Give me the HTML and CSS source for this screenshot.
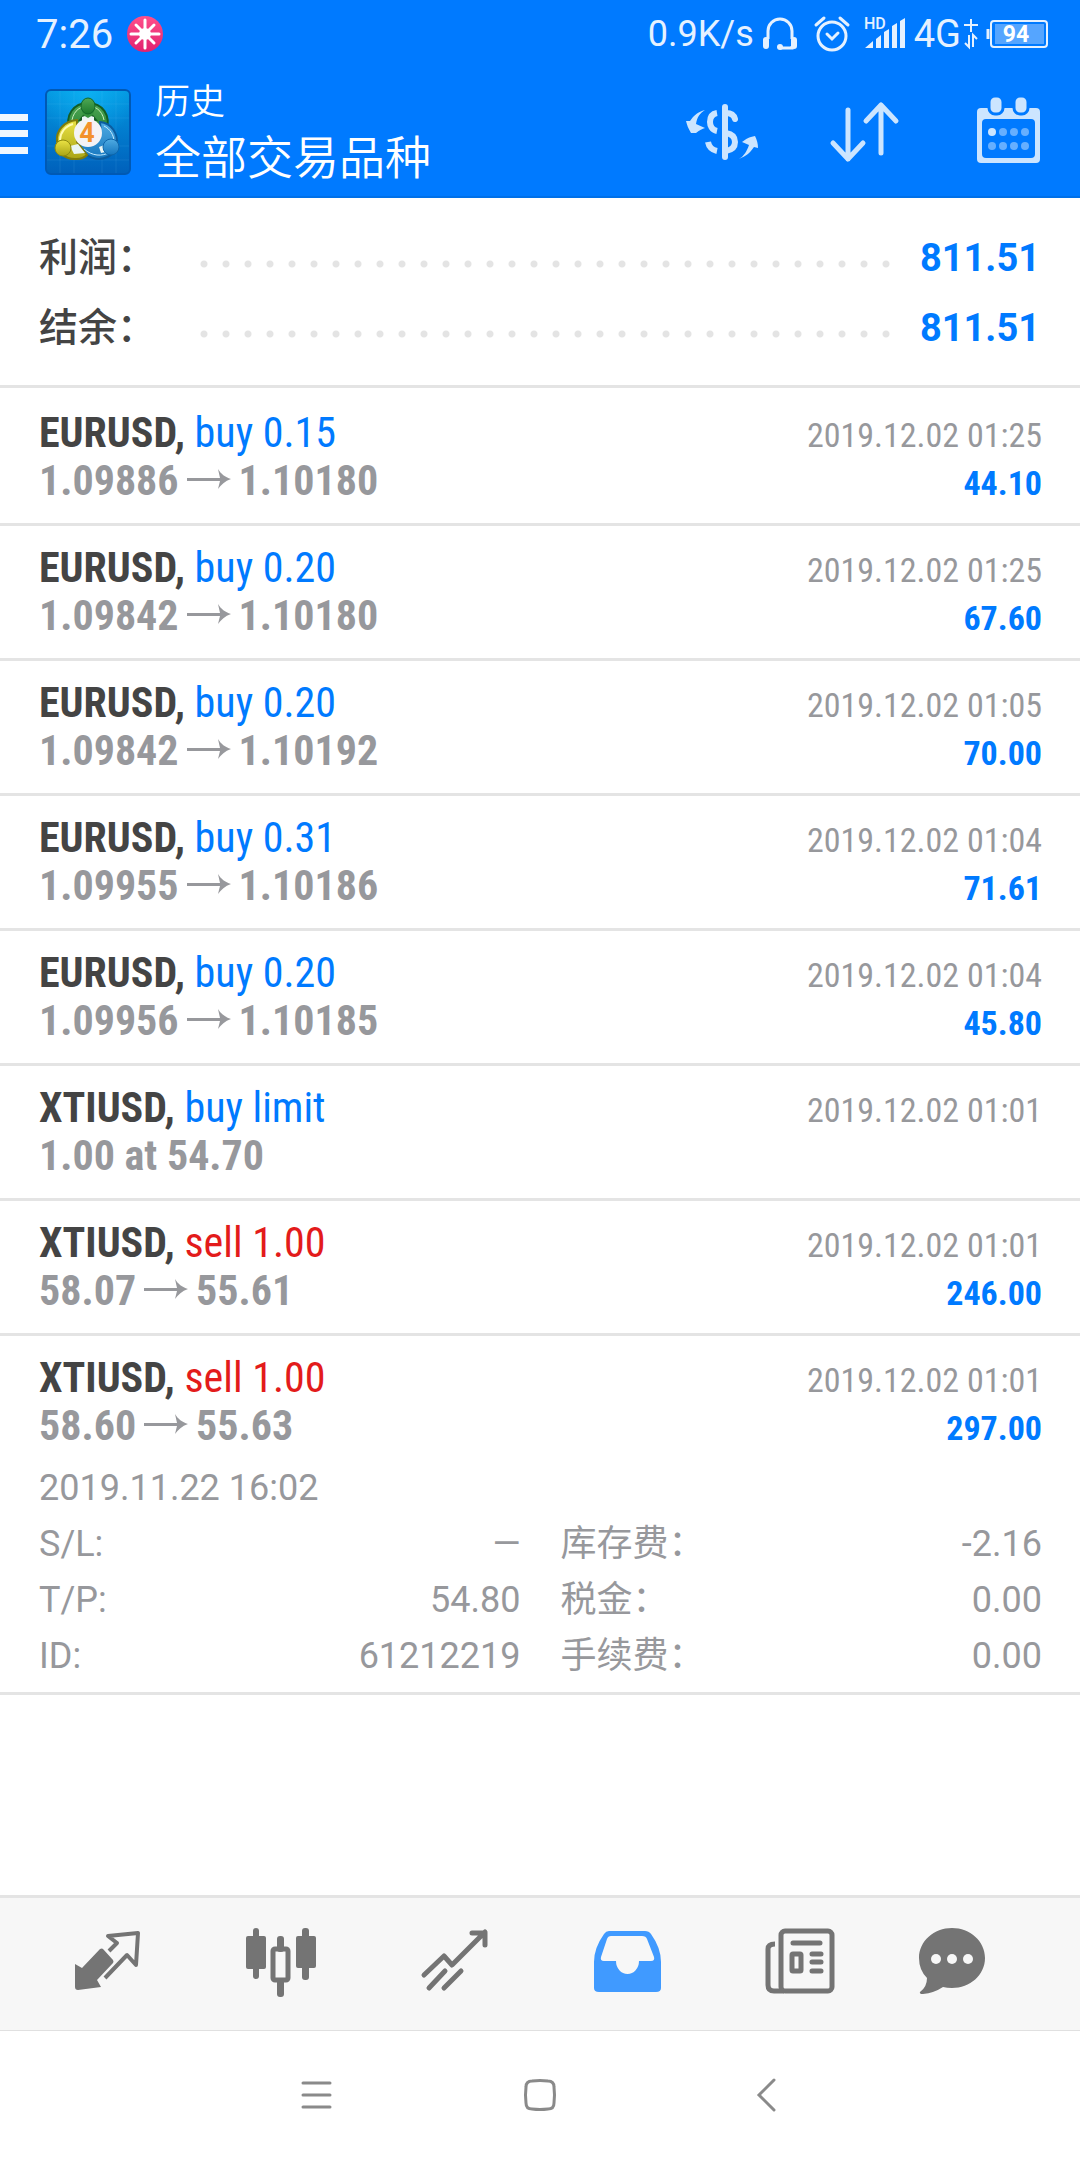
FILE: index.html
```html
<!DOCTYPE html>
<html lang="zh-CN">
<head>
<meta charset="utf-8">
<meta name="viewport" content="width=device-width, initial-scale=1">
<title>历史</title>
<link rel="stylesheet" href="styles.css">
</head>
<body>
<div class="top">
  <div class="status">
    <span class="status-time">7:26</span>
    <svg class="status-app" width="36" height="36" viewBox="0 0 36 36" aria-hidden="true">
      <defs><linearGradient id="pink" x1="0" y1="0" x2="0" y2="1"><stop offset="0" stop-color="#ff4f8b"/><stop offset="1" stop-color="#e0226f"/></linearGradient></defs>
      <circle cx="18" cy="18" r="18" fill="url(#pink)"/>
      <circle cx="18" cy="18" r="6" fill="#fff"/>
      <path d="M18 4v28M4 18h28M9 9l18 18M27 9L9 27" stroke="#fff" stroke-width="3" stroke-linecap="round"/>
    </svg>
    <span class="status-speed">0.9K/s</span>
    <svg class="status-phones" width="36" height="34" viewBox="0 0 36 34" fill="none" stroke="#e5f1ff" aria-hidden="true">
      <path d="M6 22V14a12 12 0 0 1 24 0v8" stroke-width="3"/>
      <path d="M4 23v6M32 23v6" stroke-width="6" stroke-linecap="round"/>
      <path d="M30 29v2H18" stroke-width="3"/><circle cx="18" cy="30" r="3" fill="#e5f1ff" stroke="none"/>
    </svg>
    <svg class="status-alarm" width="36" height="36" viewBox="0 0 36 36" fill="none" stroke="#e5f1ff" stroke-width="3" stroke-linecap="round" aria-hidden="true">
      <circle cx="18" cy="20" r="14"/><path d="M13 18l5 5 6-6M2 9l8-7M34 9l-8-7"/>
    </svg>
    <svg class="status-signal" width="44" height="34" viewBox="0 0 44 34" fill="#e5f1ff" aria-hidden="true">
      <text x="0" y="12" class="hd">HD</text>
      <path d="M1 31l8-7v7zM12 31V22l5-4v13zM20 31V15l5-3v19zM28 31V9l5-3v25zM36 31V4l5-3v30z"/>
    </svg>
    <span class="status-net">4G</span>
    <svg class="status-data" width="14" height="32" viewBox="0 0 14 32" fill="none" stroke="#e5f1ff" stroke-width="2" aria-hidden="true">
      <path d="M7 1v13M0 7h14M5 17v12l-4-4M9 29V17l4 4"/>
    </svg>
    <svg class="status-battery" width="62" height="28" viewBox="0 0 62 28" aria-hidden="true">
      <path d="M2 9v10" stroke="#e5f1ff" stroke-width="3"/>
      <rect x="5" y="1" width="56" height="26" rx="3" fill="none" stroke="#e5f1ff" stroke-width="2"/>
      <rect x="9" y="4" width="49" height="20" fill="#55a5ff"/>
      <text x="30" y="22" text-anchor="middle" class="charge">94</text>
    </svg>
  </div>

  <header class="appbar">
    <button class="menu" type="button" aria-label="菜单">
      <svg width="28" height="48" viewBox="0 0 28 48" fill="#f0f7ff"><path d="M0 6h28v7H0zM0 22h28v7H0zM0 39h28v7H0z"/></svg>
    </button>
    <svg class="logo" width="86" height="86" viewBox="0 0 86 86" aria-hidden="true">
      <defs>
        <linearGradient id="sky" x1="0" y1="0" x2="0" y2="1"><stop offset="0" stop-color="#0397e0"/><stop offset="1" stop-color="#0060bb"/></linearGradient>
        <radialGradient id="shine" cx=".5" cy="0" r=".6"><stop offset="0" stop-color="#12c2ff" stop-opacity=".6"/><stop offset="1" stop-color="#12c2ff" stop-opacity="0"/></radialGradient>
        <linearGradient id="green" x1="0" y1="0" x2="0" y2="1"><stop offset="0" stop-color="#4fa855"/><stop offset="1" stop-color="#1d7a2c"/></linearGradient>
        <linearGradient id="yellow" x1="0" y1="0" x2="0" y2="1"><stop offset="0" stop-color="#ebe345"/><stop offset="1" stop-color="#a9a414"/></linearGradient>
        <linearGradient id="blue" x1="0" y1="0" x2="0" y2="1"><stop offset="0" stop-color="#4fabe2"/><stop offset="1" stop-color="#1576bf"/></linearGradient>
      </defs>
      <rect x="1" y="1" width="84" height="84" rx="5" fill="url(#sky)" stroke="#0059b4" stroke-width="2"/>
      <rect x="2" y="2" width="82" height="82" rx="4" fill="url(#shine)"/>
      <path d="M15 2v82M29 2v82M57 2v82M71 2v82M2 15h82M2 29h82M2 57h82M2 71h82" stroke="#7fd0ff" stroke-opacity=".12"/>
      <path d="M25 42C19 26 29 14 43 14s24 12 18 29c-2 6-7 7-13 7z" fill="url(#green)" stroke="#135f24" stroke-width="2"/>
      <path d="M27 31C29 21 36 17 43 17s14 4 16 14" fill="none" stroke="#c8efc0" stroke-width="1"/>
      <path d="M33 32l5-6h10l5 6z" fill="#165f26"/>
      <path d="M55 33c12 1 18 12 17 23-2 11-14 16-24 13-7-2-12-8-14-14l14-4c6-4 9-9 7-18z" fill="url(#blue)" stroke="#0b5c9f" stroke-width="2"/>
      <path d="M59 37c6 3 10 9 10 16M39 60c8 7 18 8 26 3" fill="none" stroke="#c4ebff" stroke-width="1"/>
      <path d="M32 31c-14 1-21 12-20 21 0 12 9 19 20 18 5 0 8-2 10-4L32 53z" fill="url(#yellow)" stroke="#7f7c0c" stroke-width="2"/>
      <path d="M28 35c-8 2-13 9-13 16" fill="none" stroke="#fffbb0" stroke-width="2"/>
      <path d="M25 57l8-2 7 9-11 1zM54 58l8-3 3 7-9 2zM37 28l6-2 6 2v4H37z" fill="#e9f5f4"/>
      <path d="M37 22h12l-1 4-5 3-5-3z" fill="#35923f"/>
      <ellipse cx="43" cy="17" rx="7" ry="8" fill="url(#green)" stroke="#14682a"/>
      <circle cx="18" cy="59" r="8" fill="url(#yellow)" stroke="#8d8a10"/>
      <circle cx="66" cy="58" r="8" fill="url(#blue)" stroke="#0e66ab"/>
      <circle cx="43" cy="44" r="14" fill="#f4f3f5"/>
      <text x="42" y="53" text-anchor="middle" class="logo-digit">4</text>
    </svg>
    <div class="titles">
      <h1 class="title">历史</h1>
      <p class="subtitle">全部交易品种</p>
    </div>
    <div class="actions">
      <button type="button" aria-label="货币">
        <svg width="72" height="72" viewBox="0 0 72 72" fill="#cce5ff">
          <path d="M19 14C14 17 11 21 10 28l9 4c-3 1-5 2-9 5h-5C2 32 1 29 0 25h4C8 19 12 16 19 14zM53 63c5-3 8-8 10-14l-7-3c4-3 7-5 13-6 2 4 3 8 3 12l-4-1c-4 6-8 9-15 12z"/>
          <rect x="36" y="8" width="6" height="56" rx="3"/>
          <path d="M31 17c-6 1-7 5-7 9s2 8 7 9M31 55c-5-1-8-4-9-9" fill="none" stroke="#cce5ff" stroke-width="6"/>
          <path d="M40 17c5 0 8 2 9 6" fill="none" stroke="#cce5ff" stroke-width="6" stroke-linecap="round"/>
          <path d="M40 37c6 1 9 4 9 9s-3 8-9 9" fill="none" stroke="#cce5ff" stroke-width="6"/>
        </svg>
      </button>
      <button type="button" aria-label="排序">
        <svg width="72" height="72" viewBox="0 0 72 72" fill="none" stroke="#cce5ff" stroke-width="5" stroke-linecap="round" stroke-linejoin="round">
          <path d="M19 14v49M4 47l15 16 15-16M52 57V9M37 25L52 9l15 16"/>
        </svg>
      </button>
      <button type="button" aria-label="日历">
        <svg width="72" height="72" viewBox="0 0 72 72">
          <rect x="5" y="12" width="63" height="55" rx="4" fill="#cce5ff"/>
          <rect x="10" y="23" width="53" height="39" rx="4" fill="#007aff"/>
          <g fill="#cce5ff" stroke="#007aff" stroke-width="3"><rect x="17" y="0" width="14" height="18" rx="6"/><rect x="42" y="0" width="14" height="18" rx="6"/></g>
          <circle cx="20" cy="36" r="4" fill="#cce5ff"/>
          <g fill="#66afff"><circle cx="31" cy="36" r="4"/><circle cx="42" cy="36" r="4"/><circle cx="53" cy="36" r="4"/><circle cx="20" cy="50" r="4"/><circle cx="31" cy="50" r="4"/><circle cx="42" cy="50" r="4"/><circle cx="53" cy="50" r="4"/></g>
        </svg>
      </button>
    </div>
  </header>
</div>

<svg class="sprite" aria-hidden="true">
  <symbol id="arrow" viewBox="0 0 44 22"><path d="M0 10h33L31 1c3 5 7 8 13 10-6 2-10 6-13 10l2-8H0z" fill="#97989c"/></symbol>
</svg>

<main class="content">
  <dl class="summary">
    <div class="summary-row"><dt>利润：</dt><dd class="leader" aria-hidden="true"></dd><dd class="total">811.51</dd></div>
    <div class="summary-row"><dt>结余：</dt><dd class="leader" aria-hidden="true"></dd><dd class="total">811.51</dd></div>
  </dl>

  <ul class="deals">
    <li class="deal">
      <div class="line"><span><b class="symbol">EURUSD,</b> <span class="buy">buy 0.15</span></span><time class="date">2019.12.02 01:25</time></div>
      <div class="line"><span class="prices">1.09886<svg class="arrow"><use href="#arrow"/></svg>1.10180</span><b class="profit">44.10</b></div>
    </li>
    <li class="deal">
      <div class="line"><span><b class="symbol">EURUSD,</b> <span class="buy">buy 0.20</span></span><time class="date">2019.12.02 01:25</time></div>
      <div class="line"><span class="prices">1.09842<svg class="arrow"><use href="#arrow"/></svg>1.10180</span><b class="profit">67.60</b></div>
    </li>
    <li class="deal">
      <div class="line"><span><b class="symbol">EURUSD,</b> <span class="buy">buy 0.20</span></span><time class="date">2019.12.02 01:05</time></div>
      <div class="line"><span class="prices">1.09842<svg class="arrow"><use href="#arrow"/></svg>1.10192</span><b class="profit">70.00</b></div>
    </li>
    <li class="deal">
      <div class="line"><span><b class="symbol">EURUSD,</b> <span class="buy">buy 0.31</span></span><time class="date">2019.12.02 01:04</time></div>
      <div class="line"><span class="prices">1.09955<svg class="arrow"><use href="#arrow"/></svg>1.10186</span><b class="profit">71.61</b></div>
    </li>
    <li class="deal">
      <div class="line"><span><b class="symbol">EURUSD,</b> <span class="buy">buy 0.20</span></span><time class="date">2019.12.02 01:04</time></div>
      <div class="line"><span class="prices">1.09956<svg class="arrow"><use href="#arrow"/></svg>1.10185</span><b class="profit">45.80</b></div>
    </li>
    <li class="deal">
      <div class="line"><span><b class="symbol">XTIUSD,</b> <span class="buy">buy limit</span></span><time class="date">2019.12.02 01:01</time></div>
      <div class="line"><span class="prices">1.00 at 54.70</span></div>
    </li>
    <li class="deal">
      <div class="line"><span><b class="symbol">XTIUSD,</b> <span class="sell">sell 1.00</span></span><time class="date">2019.12.02 01:01</time></div>
      <div class="line"><span class="prices">58.07<svg class="arrow"><use href="#arrow"/></svg>55.61</span><b class="profit">246.00</b></div>
    </li>
    <li class="deal deal-open">
      <div class="line"><span><b class="symbol">XTIUSD,</b> <span class="sell">sell 1.00</span></span><time class="date">2019.12.02 01:01</time></div>
      <div class="line"><span class="prices">58.60<svg class="arrow"><use href="#arrow"/></svg>55.63</span><b class="profit">297.00</b></div>
      <div class="details">
        <time class="opened">2019.11.22 16:02</time>
        <dl class="fields">
          <div class="field"><dt>S/L:</dt><dd>—</dd></div>
          <div class="field"><dt>库存费：</dt><dd>-2.16</dd></div>
          <div class="field"><dt>T/P:</dt><dd>54.80</dd></div>
          <div class="field"><dt>税金：</dt><dd>0.00</dd></div>
          <div class="field"><dt>ID:</dt><dd>61212219</dd></div>
          <div class="field"><dt>手续费：</dt><dd>0.00</dd></div>
        </dl>
      </div>
    </li>
  </ul>
</main>

<nav class="tabs">
  <a href="#quotes" aria-label="行情">
    <svg width="72" height="72" viewBox="0 0 72 72">
      <path d="M3 38l7 4 18-19q2-1 3 0l10 11q1 2 0 3L25 54l4 7L6 64q-3 0-3-3z" fill="#747474"/>
      <path d="M37 25l8-8-9-7 30-3-2 32-9-10-22 23" fill="none" stroke="#747474" stroke-width="4" stroke-linejoin="round"/>
    </svg>
  </a>
  <a href="#charts" aria-label="图表">
    <svg width="72" height="72" viewBox="0 0 72 72" fill="#747474">
      <rect x="1" y="10" width="20" height="33" rx="2"/><rect x="8" y="2" width="6" height="51" rx="3"/>
      <rect x="51" y="10" width="20" height="32" rx="2"/><rect x="57" y="2" width="7" height="52" rx="3"/>
      <rect x="32" y="10" width="7" height="16" rx="3"/><rect x="32" y="52" width="7" height="19" rx="3"/>
      <rect x="28" y="23" width="15" height="31" rx="2" fill="none" stroke="#747474" stroke-width="5"/>
    </svg>
  </a>
  <a href="#trade" aria-label="交易">
    <svg width="72" height="72" viewBox="0 0 72 72" fill="none" stroke="#747474" stroke-width="5" stroke-linecap="round" stroke-linejoin="round">
      <path d="M6 49l20-19 8 9 33-33M54 7h13v12M11 62l16-17M26 62l17-17"/>
    </svg>
  </a>
  <a href="#history" aria-label="历史" aria-current="page">
    <svg width="72" height="72" viewBox="0 0 72 72" fill="#409aff" fill-rule="evenodd">
      <path d="M18 5h36q4 0 6 3 10 14 10 28v26q0 4-5 4H8q-5 0-5-4V36Q3 22 13 8q2-3 5-3zM20 10q-3 0-4 3L10 31q-1 4 3 4h12a11.500 13 0 0 0 23 0h12q4 0 3-4l-7-18q-1-3-5-3z"/>
    </svg>
  </a>
  <a href="#news" aria-label="新闻">
    <svg width="72" height="72" viewBox="0 0 72 72" fill="none" stroke="#747474" stroke-width="5">
      <rect x="17" y="5" width="51" height="60" rx="4"/>
      <path d="M11 18q-7 0-7 5v36q0 6 6 6h10"/>
      <path d="M29 17h27M48 28h9M48 36h9M48 45h9" stroke-linecap="round"/>
      <rect x="28" y="28" width="9" height="17" rx="1"/>
    </svg>
  </a>
  <a href="#messages" aria-label="消息">
    <svg width="72" height="72" viewBox="0 0 72 72">
      <path d="M36 2c18 0 33 13 33 30S54 62 36 62q-5 0-9-1-9 6-20 7-4 0-3-2 7-5 7-14Q3 44 3 32C3 15 18 2 36 2z" fill="#747474"/>
      <g fill="#f7f7f7"><circle cx="20" cy="33" r="5"/><circle cx="36" cy="33" r="5"/><circle cx="52" cy="33" r="5"/></g>
    </svg>
  </a>
</nav>

<div class="sysnav">
  <button type="button" aria-label="最近任务"><svg width="36" height="36" viewBox="0 0 36 36" stroke="#8a8a8a" stroke-width="3" stroke-linecap="round"><path d="M5 6h27M5 18h27M5 30h27"/></svg></button>
  <button type="button" aria-label="主屏幕"><svg width="36" height="36" viewBox="0 0 36 36" fill="none" stroke="#8a8a8a" stroke-width="3"><path d="M10 4q8-1 16 0 6 0 6 6 1 8 0 16 0 6-6 6-8 1-16 0-6 0-6-6-1-8 0-16 0-6 6-6z"/></svg></button>
  <button type="button" aria-label="返回"><svg width="36" height="36" viewBox="0 0 36 36" fill="none" stroke="#8a8a8a" stroke-width="3" stroke-linecap="round"><path d="M28 3L13 18l15 15"/></svg></button>
</div>
</body>
</html>
```

FILE: styles.css
```css
* { box-sizing: border-box; }

body {
  margin: 0;
  min-height: 100vh;
  display: flex;
  flex-direction: column;
  background: #fff;
  color: #444;
  font-family: Roboto, "Noto Sans CJK SC", sans-serif;
}

h1, p, dl, dd, ul { margin: 0; padding: 0; }
svg { display: block; flex: none; overflow: visible; }
button { padding: 0; border: 0; background: none; }
.sprite { position: absolute; width: 0; height: 0; }

/* Status bar and app bar */
.top { background: #007aff; border-bottom: 2px solid #0070e8; color: #e5f1ff; }

.status {
  display: flex;
  align-items: center;
  height: 68px;
  padding: 0 32px 0 36px;
  font-size: 38px;
}
.status-time { font-size: 40px; }
.status-app { margin-left: 14px; }
.status-speed { margin-left: auto; font-size: 36px; }
.status-phones { margin-left: 8px; }
.status-alarm { margin-left: 16px; }
.status-signal { margin-left: 14px; }
.status-net { margin-left: 6px; }
.status-data { margin-left: 3px; }
.status-battery { margin-left: 8px; }
.hd { font-size: 16px; font-weight: 500; }
.charge { font-size: 23px; font-weight: 700; fill: #fff; }

.appbar { display: flex; align-items: center; height: 128px; padding-right: 36px; }
.logo { margin-left: 17px; }
.logo-digit { font-size: 27px; font-weight: 700; fill: #f3922c; }
.titles { margin-left: 24px; color: #fff; }
.title { font-size: 35px; font-weight: 350; line-height: 52px; }
.subtitle { font-size: 46px; font-weight: 350; line-height: 58px; }
.actions { display: flex; gap: 71px; margin-left: auto; }

/* Totals */
.content { flex: 1; }
.summary { padding: 25px 40px 22px 39px; border-bottom: 3px solid #e4e4e4; }
.summary-row { display: flex; align-items: center; height: 70px; font-size: 38px; }
.summary-row dt { width: 154px; font-size: 39px; font-weight: 500; line-height: 48px; }
.leader {
  flex: 1;
  height: 8px;
  margin: 12px 24px 0 0;
  background: radial-gradient(circle at center, #e4e4e4 3px, transparent 4px) 0 0 / 22px 8px;
}
.total { color: #007aff; font-weight: 700; }

/* Deals */
.deals { padding-top: 3px; list-style: none; font-family: "Roboto Condensed", "Liberation Sans Narrow", sans-serif; }
.deal { padding: 18px 38px 18px 39px; border-bottom: 3px solid #e4e4e4; }
.deal-open { padding-bottom: 8px; }
.line { display: flex; justify-content: space-between; align-items: baseline; height: 48px; font-size: 42px; line-height: 48px; }
.buy { color: #007aff; }
.sell { color: #e31b1b; }
.prices { color: #97989c; font-weight: 700; }
.arrow { display: inline-block; width: 44px; height: 22px; margin: 0 8px; vertical-align: 5px; }
.date { color: #97989c; font-size: 34px; }
.profit { color: #007aff; font-size: 34px; }

.details { margin-top: 10px; color: #97989c; font: 36px/56px Roboto, "Noto Sans CJK SC", sans-serif; }
.opened { display: block; }
.fields { display: grid; grid-template-columns: 1fr 1fr; column-gap: 40px; }
.field { display: flex; justify-content: space-between; height: 56px; }

/* Bottom tabs */
.tabs {
  display: grid;
  grid-template-columns: repeat(5, 173fr) 131fr;
  justify-items: center;
  padding: 28px 63px 32px 21px;
  border-top: 3px solid #e4e4e4;
  border-bottom: 1px solid #e0e0e0;
  background: #f7f7f7;
}

.sysnav { display: flex; justify-content: center; gap: 188px; padding: 46px 0 47px; }
```
